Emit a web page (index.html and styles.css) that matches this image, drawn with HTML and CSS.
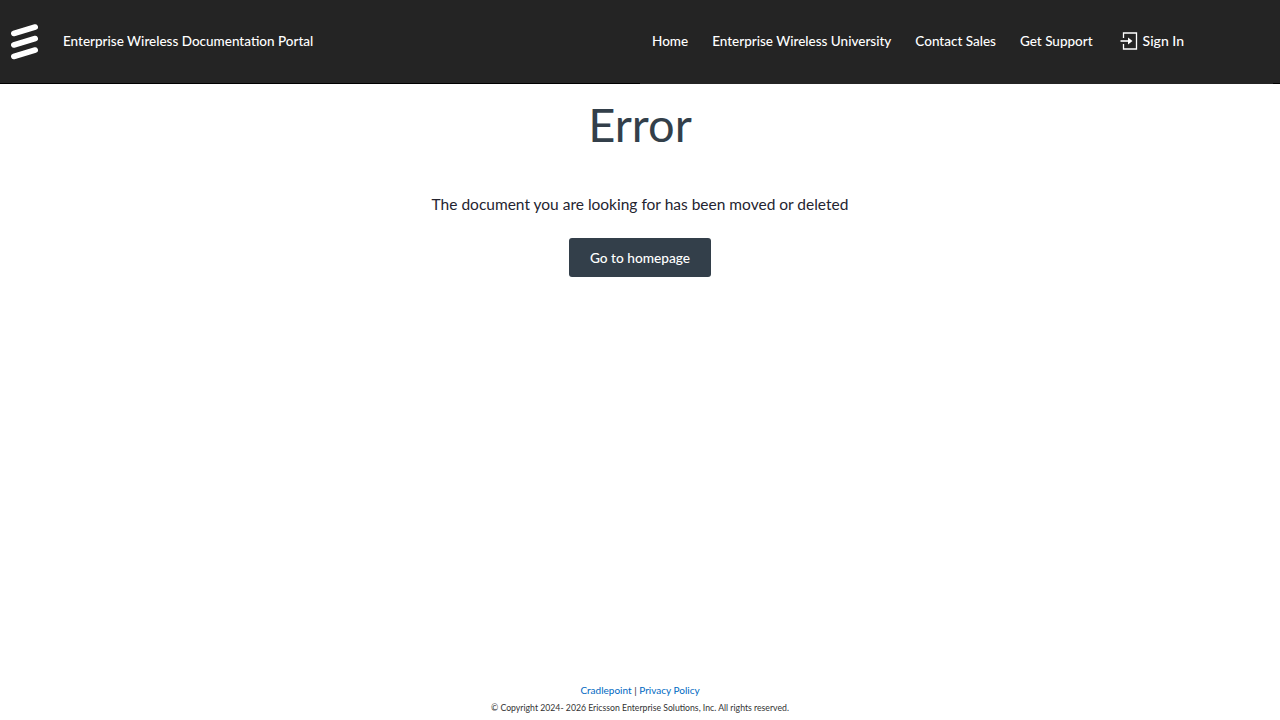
FILE: index.html
```html
<!DOCTYPE html>
<html lang="en">
<head>
    <meta charset="UTF-8">
    <meta name="viewport" content="width=device-width, initial-scale=1.0">
    <title>Error - Enterprise Wireless Documentation Portal</title>
    <link rel="stylesheet" href="styles.css">
</head>
<body>
    <header class="topbar">
        <a class="brand" href="#">
            <svg class="brand-logo" width="28" height="38" viewBox="0 0 28 38">
                <path d="M3.800 10.500 L25.200 4 M3.800 22 L25.200 15.500 M3.800 33.500 L25.200 27" stroke="#fff" stroke-width="5.600" stroke-linecap="round" fill="none"/>
            </svg>
            <span class="brand-name">Enterprise Wireless Documentation Portal</span>
        </a>
        <nav class="nav-links">
            <a href="#">Home</a>
            <a href="#">Enterprise Wireless University</a>
            <a href="#">Contact Sales</a>
            <a href="#">Get Support</a>
            <a class="sign-in" href="#">
                <svg width="18" height="18" viewBox="0 0 18 18" fill="none" stroke="#fff" stroke-width="1.300">
                    <path d="M3.500 6 V1 H16.500 V17 H3.500 V12"/>
                    <path d="M0.500 9 H8" stroke-width="1.600"/>
                    <path d="M8 5.500 L12.500 9 L8 12.500 Z" fill="#fff" stroke="none"/>
                </svg>
                Sign In
            </a>
        </nav>
    </header>

    <main class="error-page">
        <h1>Error</h1>
        <p>The document you are looking for has been moved or deleted</p>
        <a class="home-btn" href="#">Go to homepage</a>
    </main>

    <footer class="site-footer">
        <div class="footer-links"><a href="#">Cradlepoint</a> | <a href="#">Privacy Policy</a></div>
        <div class="copyright">© Copyright 2024- 2026 Ericsson Enterprise Solutions, Inc. All rights reserved.</div>
    </footer>
</body>
</html>
```

FILE: styles.css
```css
* {
    margin: 0;
    padding: 0;
    box-sizing: border-box;
}
body {
    font-family: Lato, "Noto Sans", sans-serif;
    background: #fff;
    height: 100vh;
    display: flex;
    flex-direction: column;
    overflow: hidden;
}
a {
    text-decoration: none;
}
.topbar {
    height: 84px;
    flex-shrink: 0;
    display: flex;
    background: #242424;
    border-bottom: 1px solid;
    border-image: linear-gradient(to right, #000 640px, #242424 640px, #242424 1272px, #000 1272px) 1;
}
.brand {
    width: 640px;
    display: flex;
    align-items: center;
    color: #fff;
    padding-left: 10px;
}
.brand-logo {
    margin-right: 25px;
}
.brand-name {
    font-size: 13.500px;
    font-weight: 500;
    padding-bottom: 2px;
}
.nav-links {
    display: flex;
    align-items: center;
    gap: 24px;
    padding-left: 12px;
    padding-bottom: 2px;
}
.nav-links a {
    color: #fff;
    font-size: 13.500px;
    font-weight: 500;
}
.nav-links .sign-in {
    display: flex;
    align-items: center;
    gap: 5px;
    margin-left: 3px;
    font-size: 14px;
}
.error-page {
    flex: 1;
    display: flex;
    flex-direction: column;
    align-items: center;
}
h1 {
    font-size: 47px;
    font-weight: 400;
    color: #333f4a;
    line-height: 58px;
    margin-top: 11px;
}
.error-page p {
    font-size: 15.500px;
    color: #242430;
    margin-top: 41px;
    line-height: 20px;
}
.home-btn {
    margin-top: 24px;
    width: 142px;
    height: 39px;
    padding-bottom: 1px;
    display: flex;
    align-items: center;
    justify-content: center;
    background: #333f4a;
    color: #fff;
    font-size: 13.700px;
    font-weight: 500;
    border-radius: 3px;
}
.site-footer {
    text-align: center;
    padding-bottom: 6px;
}
.footer-links {
    font-size: 10px;
    line-height: 14px;
    color: #333;
}
.footer-links a {
    color: #0069c2;
}
.copyright {
    font-size: 8.700px;
    line-height: 12px;
    margin-top: 5px;
    color: #333;
}
```
